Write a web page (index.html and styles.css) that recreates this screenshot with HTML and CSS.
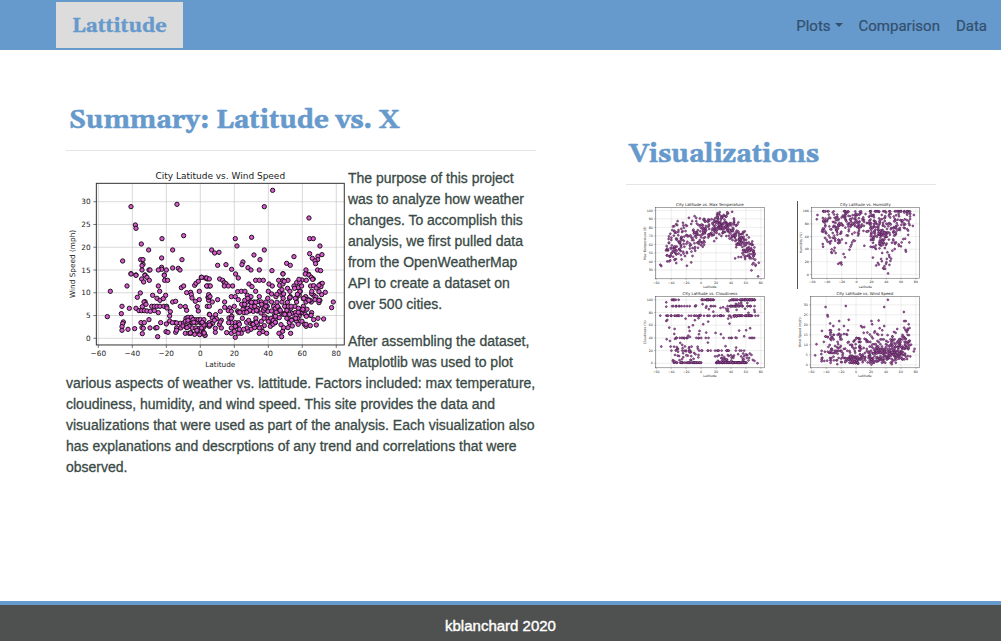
FILE: index.html
```html
<!DOCTYPE html>
<html lang="en">
<head>
<meta charset="utf-8">
<meta name="viewport" content="width=device-width, initial-scale=1">
<title>Lattitude</title>
<link rel="stylesheet" href="styles.css">
</head>
<body>
<nav class="navbar">
  <a class="brand" href="#">Lattitude</a>
  <div class="nav-links">
    <button class="nav-link dropdown" type="button" aria-haspopup="true">Plots</button>
    <a class="nav-link" href="#">Comparison</a>
    <a class="nav-link" href="#">Data</a>
  </div>
</nav>
<main class="content">
  <article class="summary">
    <h1 class="heading">Summary: Latitude vs. X</h1>
    <svg class="chart chart-main" data-chart="wind" viewBox="0 0 846 606" role="img" aria-label="Wind speed by latitude"></svg>
    <p>The purpose of this project was to analyze how weather changes. To accomplish this analysis, we first pulled data from the OpenWeatherMap API to create a dataset on over 500 cities.</p>
    <p>After assembling the dataset, Matplotlib was used to plot various aspects of weather vs. lattitude. Factors included: max temperature, cloudiness, humidity, and wind speed. This site provides the data and visualizations that were used as part of the analysis. Each visualization also has explanations and descrptions of any trend and correlations that were observed.</p>
  </article>
  <aside class="visuals">
    <h2 class="heading">Visualizations</h2>
    <div class="gallery">
      <a class="thumb" href="#"><svg class="chart" data-chart="temp" viewBox="0 0 846 606" role="img" aria-label="Max temperature by latitude"></svg></a>
      <a class="thumb" href="#"><svg class="chart edged" data-chart="humidity" viewBox="0 0 846 606" role="img" aria-label="Humidity by latitude"></svg></a>
      <a class="thumb" href="#"><svg class="chart" data-chart="clouds" viewBox="0 0 846 606" role="img" aria-label="Cloudiness by latitude"></svg></a>
      <a class="thumb" href="#"><svg class="chart" data-chart="wind" viewBox="0 0 846 606" role="img" aria-label="Wind speed by latitude"></svg></a>
    </div>
  </aside>
</main>
<footer class="footer">kblanchard 2020</footer>
<script src="charts.js"></script>
</body>
</html>
```
FILE: styles.css
```css
* { box-sizing: border-box; }
body {
  margin: 0;
  min-height: 100vh;
  display: flex;
  flex-direction: column;
  background: #fff;
  color: #3a4a46;
  font: 14px/21px Arial, "Liberation Sans", sans-serif;
}
.navbar {
  display: flex;
  align-items: center;
  justify-content: space-between;
  height: 50px;
  padding: 0 6px 0 56px;
  background: #6699cc;
}
.brand {
  padding: 9px 16px 7px;
  margin-bottom: 1px;
  background: #dcdcdc;
  color: #6699cc;
  font: bold 20px/30px Georgia, Gelasio, "DejaVu Serif", serif;
  text-decoration: none;
  -webkit-text-stroke: 0.4px;
}
.nav-links { display: flex; padding-top: 2px; }
.nav-link {
  padding: 8px;
  border: 0;
  background: none;
  color: #33506d;
  font: 15px/24px Roboto, sans-serif;
  text-decoration: none;
  -webkit-text-stroke: 0.2px;
}
.dropdown::after {
  content: "";
  display: inline-block;
  margin-left: 4px;
  vertical-align: 4px;
  border-top: 4px solid;
  border-left: 4px solid transparent;
  border-right: 4px solid transparent;
}
.content {
  flex: 1;
  display: grid;
  grid-template-columns: 470fr 310fr;
  column-gap: 9vw;
  align-items: start;
  padding: 50px 65px 40px 66px;
}
.heading {
  margin: 0 0 16px;
  padding: 3px 3px 11px;
  border-bottom: 1px solid #e5e5e5;
  color: #6699cc;
  font: bold 26px/36px Georgia, Gelasio, "DejaVu Serif", serif;
  -webkit-text-stroke: 0.6px;
}
.summary .heading { margin-bottom: 17px; }
.summary p { margin: 0 0 16px; -webkit-text-stroke: 0.3px; }
.chart { display: block; width: 100%; }
.chart-main { float: left; width: 60%; }
.visuals { padding-top: 34px; }
.gallery { display: grid; grid-template-columns: 1fr 1fr; }
.thumb { padding: 0 10%; }
.edged { border-left: 1px solid #555; }
.footer {
  padding: 10px 0 5px;
  border-top: 4px solid #6699cc;
  background: #4f5150;
  color: #fff;
  font-size: 15px;
  text-align: center;
  -webkit-text-stroke: 0.4px;
}
.frame { fill: none; stroke: #333; stroke-width: 3; }
.grid { stroke: #c6c6c6; stroke-width: 2; }
.tick { stroke: #333; stroke-width: 2; }
.dot { fill: #d95bcd; stroke: #1c101c; stroke-width: 3; }
.thumb .dot { fill: #c65cc4; stroke: #38183c; stroke-width: 4; }
.label { fill: #222; font-family: "DejaVu Sans", sans-serif; font-size: 22px; text-anchor: middle; }
.label-end { text-anchor: end; }
.title { font-size: 27px; }
```
FILE: charts.js
```js
const NS = "http://www.w3.org/2000/svg";

function rng(seed) {
  return () => {
    seed = (seed * 1664525 + 1013904223) % 4294967296;
    return seed / 4294967296;
  };
}

// Each tile is a run of x,y pairs with its own origin and scale.
function tile(dx, dy, scale, text) {
  return text.trim().split(/\s+/).map(pair => {
    const [x, y] = pair.split(",").map(Number);
    return [(x + dx) * scale, (y + dy) * scale];
  });
}

// Latitudes are denser in the north, as in the city sample.
function latitude(r) {
  const pick = r();
  return pick < 0.36 ? -46 + r() * 50 : pick < 0.48 ? 2 + r() * 18 : 18 + r() * 55;
}
const px = lat => 403 + lat * 5.1;

const wind = [
  ...tile(-18, -9, 1, `213,125 351,118 226,180 228,190 244,237 266,255 306,221 371,212 338,255 188,288 242,284 249,284 249,298 246,315 246,302 267,315 270,315 305,279 305,307 305,313 295,315 319,315 338,309 355,310 360,315 366,284 213,326 228,330 255,330 313,330`),
  ...tile(402, -9, 1, `218,76 193,125 327,159 106,221 155,217 111,243 35,255 44,264 57,262 53,301 78,299 95,313 129,291 126,299 144,308 153,315 162,270 180,284 193,255 178,315 216,317 249,326 260,295 271,301 282,275 329,221 340,221 360,243 329,266 337,280 354,274 366,269 353,284 345,288 347,296 318,315 353,315 362,317 326,328`),
  ...tile(-18, 306, 1, `213,12 228,16 255,16 261,22 268,31 245,27 251,36 201,48 151,64 142,140 186,109 184,131 208,115 228,115 232,82 241,69 255,95 252,96 237,122 245,122 253,122 261,123 271,124 283,122 295,128 247,110 258,103 275,109 283,109 291,109 300,109 312,109 320,109 278,76 291,85 300,91 310,86 317,76 299,64 295,48 313,16 314,31 323,31 190,156 188,161 186,170 186,181 204,178 224,176 243,158 253,158 267,149 246,173 250,175 247,191 270,174 287,174 291,173 302,158 319,162 293,200 318,185 324,187 347,187 329,153 329,138 331,125 321,114 338,96 347,94 361,109 364,53 371,48 380,68 392,67 394,74 396,84 376,110 380,121 378,145 384,142 394,142 406,149 412,110 415,123 418,89 406,94 418,64 404,46 408,40 415,34 424,22 436,24 442,27 442,48 448,48 444,82 448,81 446,91 442,109 448,133 345,158 350,159 361,160 371,159 376,154 384,157 397,158 408,158 421,158 438,165 448,158 362,174 369,168 379,172 388,169 397,174 408,174 419,175 430,173 350,174 376,190 387,190 393,189 404,193 419,194 435,196 423,184 411,184 337,158 384,151`),
  ...tile(402, 306, 1, `5,22 20,24 28,27 20,48 31,48 59,27 68,31 73,38 78,41 73,48 85,48 98,48 115,24 107,12 249,12 147,42 156,50 167,31 178,31 190,31 207,42 217,48 239,46 249,42 236,31 249,31 264,31 253,34 26,82 26,74 30,80 28,109 37,96 53,89 94,80 106,80 113,65 124,64 135,64 142,76 153,80 167,64 178,80 205,64 215,72 228,80 239,64 246,76 251,72 271,80 231,73 246,59 74,96 74,112 89,114 85,122 94,124 61,124 103,109 115,89 113,123 131,109 129,118 142,96 151,95 162,109 162,96 174,95 184,96 187,109 198,96 202,109 215,96 221,109 231,97 246,96 256,109 262,120 273,115 285,109 290,96 289,85 298,76 301,64 290,38 282,48 295,53 305,48 306,30 316,12 327,15 334,22 340,27 319,31 332,48 341,47 349,54 362,42 367,40 363,50 376,67 365,74 357,65 341,76 335,71 348,81 357,98 334,96 345,89 317,80 318,96 400,96 395,113 371,147 331,167 349,165 354,145 341,149 335,128 321,118 305,128 298,134 306,154 290,154 280,147 265,145 268,158 277,168 264,173 272,190 248,184 237,190 245,200 251,173 243,164 226,158 215,158 205,154 193,167 184,173 189,185 200,190 178,190 178,174 164,173 153,178 144,183 151,160 164,158 141,174 131,178 124,190 115,190 118,178 106,169 106,158 95,158 86,158 94,174 80,188 94,190 103,184 106,202 64,174 46,187 46,175 38,160 28,169 16,164 5,158 5,174 10,187 15,196 37,144 49,146 47,134 29,134 58,163 64,151 43,151 61,156 87,144 95,141 116,158 132,128 148,123 160,124 172,123 183,129 193,121 204,124 215,123 224,135 234,124 245,129 255,131 275,130 286,128 300,118 310,86 323,88 200,144 213,145 226,148 238,143 193,138 184,154`)
];
(() => {
  const r = rng(71);
  for (let i = 0; i < 70; i++) wind.push([px(18 + r() * 45), 511 - (36 + Math.floor(r() * 15) * 6)]);
  for (let i = 0; i < 22; i++) wind.push([px(50 + r() * 21), 511 - (60 + Math.floor(r() * 14) * 9)]);
  for (let i = 0; i < 16; i++) wind.push([px(-14 + r() * 22), 511 - (16 + Math.floor(r() * 6) * 8)]);
})();

const temp = tile(-69, -31.5, 2.27, `124,223 127,227 145,213 172,218 167,208 171,206 204,226 217,216 188,207 229,181 286,152 210,82 227,77 296,68 295,73 328,68 325,71 340,64 176,92 166,122 172,101 175,104 192,97 193,105 398,240 418,258 420,217 349,204 359,200 367,200 378,200 382,148 382,157 397,160 402,163 187,115 191,122 195,112 204,106 150,158 143,167 141,180 401,222 404,218 220,92 232,92 243,84 254,88 257,86 271,88 346,95 345,84 320,78 310,78`);
(() => {
  const r = rng(19);
  for (let i = 0; i < 430; i++) {
    const lat = latitude(r);
    const mean = lat < 20 ? 81 - (20 - lat) * 0.44 : lat < 33 ? 83 : 83 - (lat - 33) * 0.95;
    const t = mean + (r() + r() + r() - 1.5) * (lat < 5 ? 20 : 16);
    temp.push([px(lat), 64 + (100 - t) * 5.8]);
  }
})();

const humidity = tile(-54, -34.5, 2.27, `111,90 113,77 405,77 402,110 327,254 312,238 316,232 321,225 331,228 314,240 318,240 291,230 296,222 299,227 306,210 308,217 281,206 323,210 331,204 336,209 334,216 330,198 322,220 176,225 181,222 185,221 186,227 192,195 196,205 165,176 156,181 155,190 163,185 168,192 157,192 380,183 381,188 255,170 210,182 213,173 216,167 218,160 222,154 226,155 129,165 130,173 127,127 131,128 290,180 301,178 306,170 317,177 340,185 347,180 343,154 351,160 359,166 368,160 373,150 366,172 309,192 325,190 301,166 308,162`);
(() => {
  const r = rng(37);
  for (let i = 0; i < 370; i++) {
    const lat = latitude(r);
    const h = Math.min(100, 82 + (r() + r() - 1) * (lat > -10 && lat < 18 ? 26 : 40));
    humidity.push([px(lat), 505 - h * 4.34]);
  }
  for (let i = 0; i < 35; i++) humidity.push([px(18 + r() * 22), 505 - (42 + r() * 30) * 4.34]);
  for (let i = 0; i < 18; i++) humidity.push([px(-45 + r() * 23), 505 - (48 + r() * 22) * 4.34]);
})();

const clouds = tile(-69, -17, 2.27, `124,94 127,187 142,54 142,67 142,94 142,110 145,107 143,165 153,170 155,187 151,130 167,134 166,149 168,164 200,103 210,129 212,140 208,154 213,158 222,123 228,108 239,102 243,94 253,120 268,112 242,140 240,150 262,145 290,146 306,150 332,118 328,103 361,139 382,138 394,132 376,156 350,160 267,175 239,162 320,186 352,190 373,208 376,216 391,221 398,212 402,227 407,230 416,237 418,94 393,208 384,221 372,228 358,210 330,215 218,187 196,162 184,176 190,182`);
(() => {
  const r = rng(83);
  const bands = [[1, 90, 20, 62], [1, 38, -37, 2], [100, 50, 40, 73], [100, 22, -1, 24], [100, 7, -42, -30], [90, 26, 35, 72], [90, 18, -45, 35], [75, 32, 45, 73], [75, 36, -46, 45], [40, 24, -34, 72], [20, 26, -40, 60]];
  for (const [value, count, from, to] of bands)
    for (let i = 0; i < count; i++) clouds.push([px(from + r() * (to - from)), 500 - value * 4.33]);
  for (let i = 0; i < 38; i++) clouds.push([px(-38 + r() * 35), 500 - (3 + r() * 25) * 4.33]);
  for (let i = 0; i < 30; i++) clouds.push([px(18 + r() * 46), 500 - (2 + r() * 12) * 4.33]);
  for (let i = 0; i < 30; i++) clouds.push([px(-8 + r() * 80), 500 - (72 + r() * 27) * 4.33]);
})();

const charts = {
  wind: { title: "City Latitude vs. Wind Speed", unit: "Wind Speed (mph)", points: wind, from: 0, step: 5, count: 7, base: 511, gap: 68.3 },
  temp: { title: "City Latitude vs. Max Temperature", unit: "Max Temperature (F)", points: temp, from: 30, step: 10, count: 8, base: 470, gap: 58 },
  humidity: { title: "City Latitude vs. Humidity", unit: "Humidity (%)", points: humidity, from: 0, step: 20, count: 6, base: 505, gap: 86.8 },
  clouds: { title: "City Latitude vs. Cloudiness", unit: "Cloudiness (%)", points: clouds, from: 0, step: 20, count: 6, base: 500, gap: 86.6 }
};

function add(svg, name, attrs, text) {
  const node = document.createElementNS(NS, name);
  for (const key in attrs) node.setAttribute(key, attrs[key]);
  if (text !== undefined) node.textContent = text;
  svg.append(node);
}

function minus(n) {
  return String(n).replace("-", "\u2212");
}

document.querySelectorAll("[data-chart]").forEach(svg => {
  const c = charts[svg.dataset.chart];
  for (let lat = -60; lat <= 80; lat += 20) {
    const x = px(lat);
    add(svg, "line", { class: "grid", x1: x, x2: x, y1: 46, y2: 531 });
    add(svg, "line", { class: "tick", x1: x, x2: x, y1: 531, y2: 540 });
    add(svg, "text", { class: "label", x, y: 564 }, minus(lat));
  }
  for (let i = 0; i < c.count; i++) {
    const y = c.base - i * c.gap;
    add(svg, "line", { class: "grid", x1: 91, x2: 835, y1: y, y2: y });
    add(svg, "line", { class: "tick", x1: 82, x2: 91, y1: y, y2: y });
    add(svg, "text", { class: "label label-end", x: 74, y: y + 8 }, c.from + i * c.step);
  }
  for (const [x, y] of c.points) add(svg, "circle", { class: "dot", cx: x.toFixed(1), cy: y.toFixed(1), r: 6.5 });
  add(svg, "rect", { class: "frame", x: 91, y: 46, width: 744, height: 485 });
  add(svg, "text", { class: "label title", x: 463, y: 34 }, c.title);
  add(svg, "text", { class: "label", x: 463, y: 596 }, "Latitude");
  add(svg, "text", { class: "label", transform: "translate(28 288) rotate(-90)" }, c.unit);
});
```
